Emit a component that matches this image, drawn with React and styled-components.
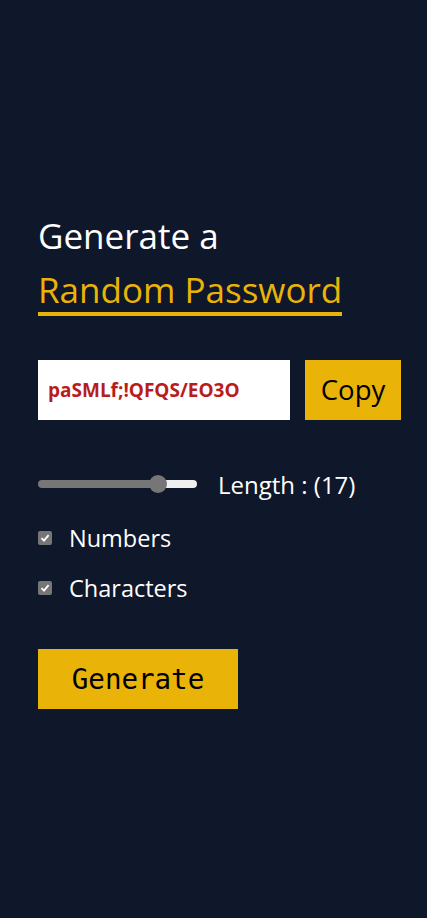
import { useState } from "react";
import styled, { createGlobalStyle } from "styled-components";

const GlobalStyle = createGlobalStyle`
  html, body {
    margin: 0;
    padding: 0;
    background: #0f172a;
  }
  * { box-sizing: border-box; }
`;

const Page = styled.div`
  min-height: 100vh;
  display: flex;
  flex-direction: column;
  justify-content: center;
  padding: 0 38px 1px;
  font-family: "Open Sans", "Noto Sans", sans-serif;
  color: #fff;
`;

const Title = styled.h1`
  margin: 0;
  font-weight: 400;
  font-size: 35px;
  line-height: 54px;
`;

const Accent = styled.span`
  display: inline-block;
  color: #eab308;
  line-height: 44px;
  border-bottom: 4px solid #eab308;
`;

const Row = styled.div`
  display: flex;
  align-items: center;
  gap: ${(p) => p.$gap || 15}px;
  margin-top: ${(p) => p.$top || 0}px;
`;

const PasswordBox = styled.input`
  flex-shrink: 0;
  width: 252px;
  height: 60px;
  border: none;
  outline: none;
  padding: 0 10px;
  font-family: "Open Sans", sans-serif;
  font-weight: 700;
  font-size: 19px;
  color: #b91c1c;
  background: #fff;
`;

const YellowButton = styled.button`
  flex-shrink: 0;
  height: 60px;
  width: ${(p) => p.$w}px;
  border: none;
  background: #eab308;
  color: #000;
  font-family: ${(p) => (p.$mono ? '"DejaVu Sans Mono", monospace' : '"Open Sans", sans-serif')};
  font-size: ${(p) => p.$size}px;
  padding: 0;
  cursor: pointer;
`;

const Range = styled.input`
  -webkit-appearance: none;
  appearance: none;
  width: 159px;
  height: 8px;
  margin: 0;
  border-radius: 4px;
  outline: none;
  &::-webkit-slider-thumb {
    -webkit-appearance: none;
    width: 18px;
    height: 18px;
    border-radius: 50%;
    background: #767676;
  }
`;

const Label = styled.span`
  font-size: 24px;
`;

const CheckRow = styled.label`
  display: flex;
  align-items: center;
  gap: 17px;
  margin-top: ${(p) => p.$top}px;
  font-size: 23.5px;
  cursor: pointer;
`;

const Box = styled.span`
  width: 14px;
  height: 14px;
  border-radius: 2px;
  background: #767676;
  display: flex;
  align-items: center;
  justify-content: center;
`;

const Check = ({ on }) => (
  <Box>
    {on && (
      <svg width="10" height="10" viewBox="0 0 10 10">
        <path d="M1.5 5.2 L4 7.6 L8.6 2.2" fill="none" stroke="#fff" strokeWidth="1.8" />
      </svg>
    )}
  </Box>
);

const Hidden = styled.input`
  display: none;
`;

const App = () => {
  const [length, setLength] = useState(17);
  const [numbers, setNumbers] = useState(true);
  const [chars, setChars] = useState(true);
  const min = 6;
  const max = 20;
  const pct = ((length - min) / (max - min)) * 100;

  return (
    <>
      <GlobalStyle />
      <Page>
        <Title>
          Generate a
          <br />
          <Accent>Random Password</Accent>
        </Title>

        <Row $top={43}>
          <PasswordBox readOnly value="paSMLf;!QFQS/EO3O" />
          <YellowButton $w={96} $size={27.5}>Copy</YellowButton>
        </Row>

        <Row $top={48} $gap={21}>
          <Range
            type="range"
            min={min}
            max={max}
            value={length}
            onChange={(e) => setLength(+e.target.value)}
            style={{
              background: `linear-gradient(to right, #767676 ${pct}%, #efefef ${pct}%)`,
            }}
          />
          <Label>Length : ({length})</Label>
        </Row>

        <CheckRow $top={21}>
          <Hidden type="checkbox" checked={numbers} onChange={() => setNumbers(!numbers)} />
          <Check on={numbers} />
          Numbers
        </CheckRow>
        <CheckRow $top={18}>
          <Hidden type="checkbox" checked={chars} onChange={() => setChars(!chars)} />
          <Check on={chars} />
          Characters
        </CheckRow>

        <Row $top={45}>
          <YellowButton $w={200} $size={27.5} $mono>Generate</YellowButton>
        </Row>
      </Page>
    </>
  );
};

export default App;
